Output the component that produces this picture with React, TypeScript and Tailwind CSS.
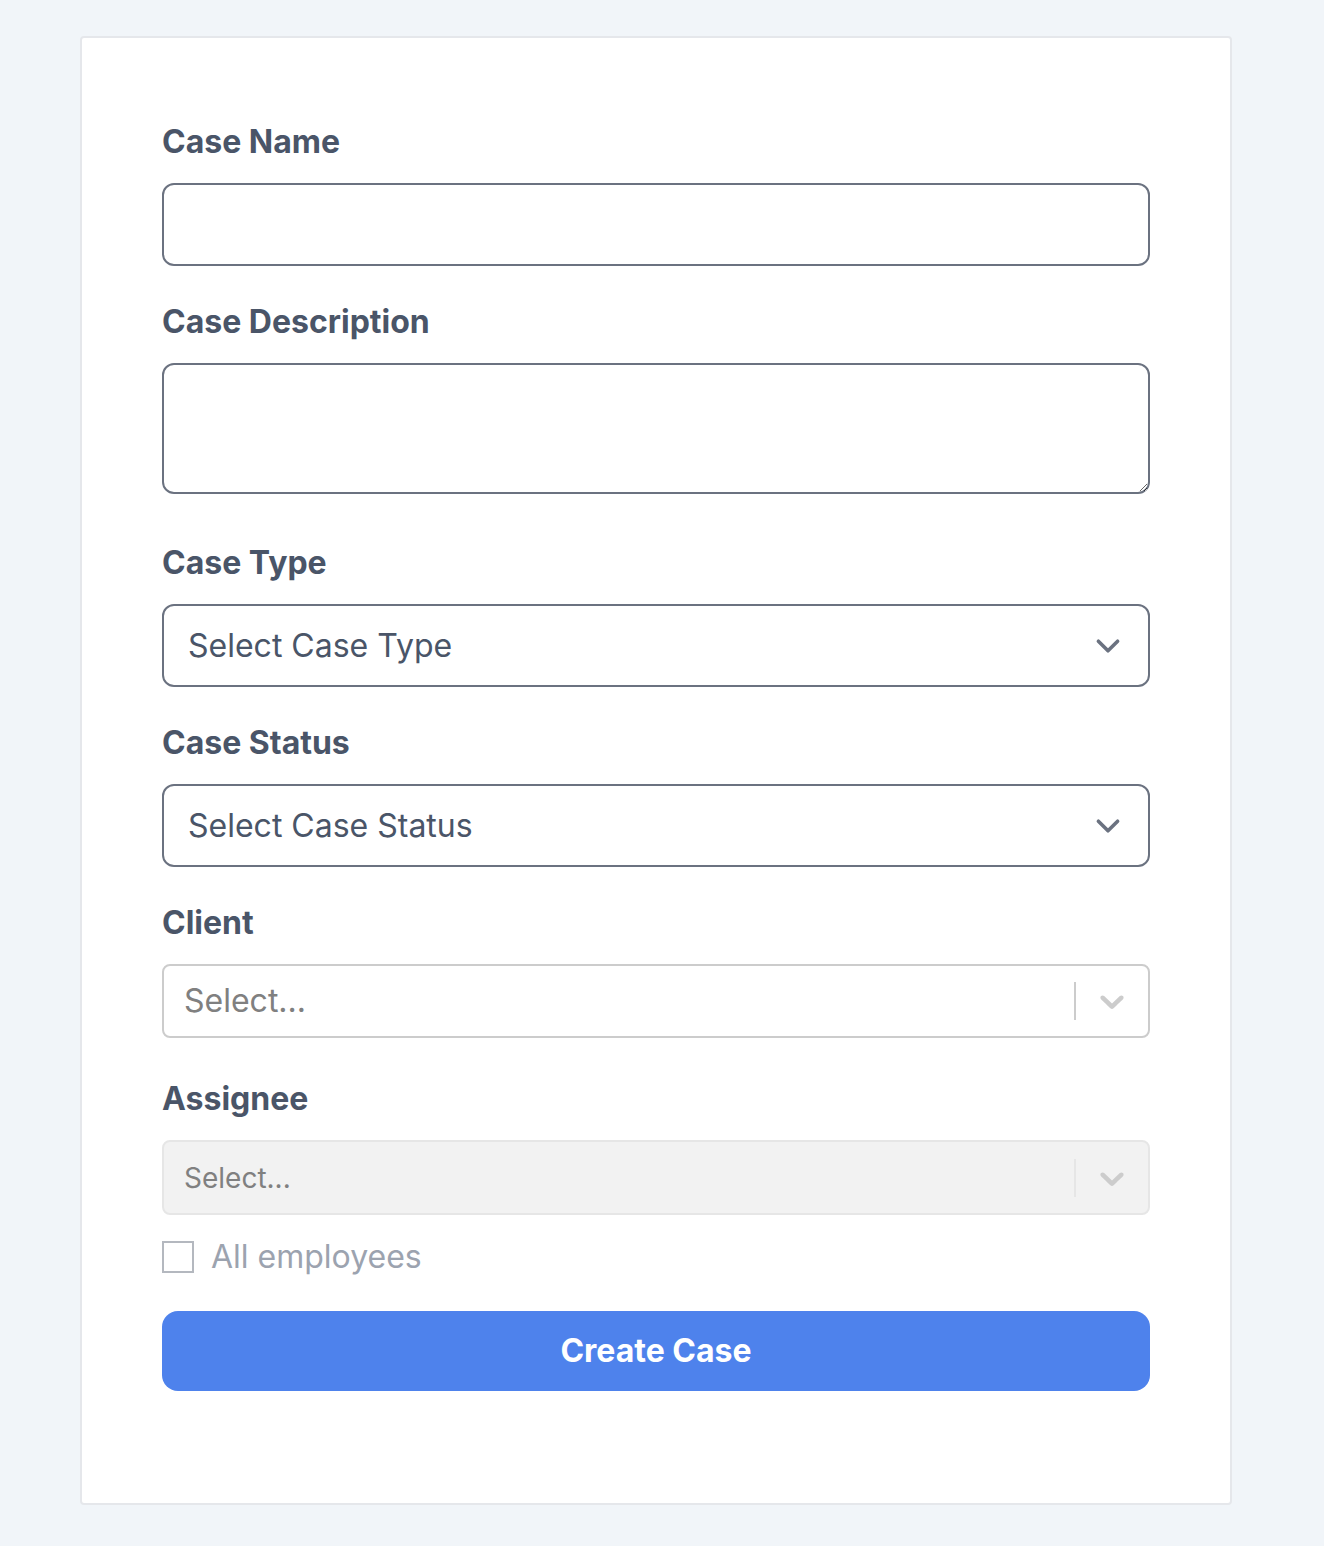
import { useState } from "react";

function Chevron() {
  return (
    <svg width="48" height="48" viewBox="0 0 20 20" fill="none" className="shrink-0">
      <path d="M6 8l4 4 4-4" stroke="#6b7280" strokeWidth="1.5" strokeLinecap="round" strokeLinejoin="round" />
    </svg>
  );
}

function SelectArrow() {
  return (
    <svg width="40" height="40" viewBox="0 0 20 20" fill="#cccccc">
      <path d="M4.516 7.548c0.436-0.446 1.043-0.481 1.576 0l3.908 3.747 3.908-3.747c0.533-0.481 1.141-0.446 1.574 0 0.436 0.445 0.408 1.197 0 1.615-0.406 0.418-4.695 4.502-4.695 4.502-0.217 0.223-0.502 0.335-0.787 0.335s-0.57-0.112-0.789-0.335c0 0-4.287-4.084-4.695-4.502s-0.436-1.17 0-1.615z" />
    </svg>
  );
}

const labelCls = "block text-[32px] leading-[48px] font-bold text-[#4a5568] mb-[17px]";

export default function App() {
  const [name, setName] = useState("");
  const [description, setDescription] = useState("");
  const [allEmployees, setAllEmployees] = useState(false);

  return (
    <div className="min-h-[1546px] bg-[#f1f5f9] pt-[36px] pb-[42px] font-['Inter',sans-serif]">
      <div className="ml-[80px] w-[1152px] rounded-[4px] border-2 border-[#e5e7eb] bg-white p-[80px] pb-[80px]">
        <form onSubmit={(e) => e.preventDefault()} className="mb-[32px]">
          <div className="mb-[32px]">
            <label htmlFor="name" className={labelCls}>
              Case Name
            </label>
            <input
              id="name"
              value={name}
              onChange={(e) => setName(e.target.value)}
              className="block h-[83px] w-full rounded-[12px] border-2 border-[#6b7280] px-[24px] text-[32px] text-[#4a5568] outline-none"
            />
          </div>

          <div className="mb-[45px]">
            <label htmlFor="description" className={labelCls}>
              Case Description
            </label>
            <textarea
              id="description"
              value={description}
              onChange={(e) => setDescription(e.target.value)}
              className="block h-[131px] w-full rounded-[12px] border-2 border-[#6b7280] px-[24px] py-[16px] text-[32px] text-[#4a5568] outline-none"
            />
          </div>

          <div className="mb-[32px]">
            <label className={labelCls}>Case Type</label>
            <div className="flex h-[83px] w-full items-center justify-between rounded-[12px] border-2 border-[#6b7280] pl-[24px] pr-[16px] text-[32px] text-[#4a5568]">
              <span>Select Case Type</span>
              <Chevron />
            </div>
          </div>

          <div className="mb-[32px]">
            <label className={labelCls}>Case Status</label>
            <div className="flex h-[83px] w-full items-center justify-between rounded-[12px] border-2 border-[#6b7280] pl-[24px] pr-[16px] text-[32px] text-[#4a5568]">
              <span>Select Case Status</span>
              <Chevron />
            </div>
          </div>

          <div className="mb-[37px]">
            <label className={labelCls}>Client</label>
            <div className="flex h-[74px] w-full items-center rounded-[8px] border-2 border-[#cccccc] bg-white">
              <span className="flex-1 pl-[20px] text-[32px] text-[#808080]">Select...</span>
              <span className="h-[38px] w-[2px] bg-[#cccccc]" />
              <span className="px-[16px]">
                <SelectArrow />
              </span>
            </div>
          </div>

          <div>
            <label className={labelCls}>Assignee</label>
            <div className="flex h-[75px] w-full items-center rounded-[8px] border-2 border-[#e6e6e6] bg-[#f2f2f2]">
              <span className="flex-1 pl-[20px] text-[28px] text-[#808080]">Select...</span>
              <span className="h-[38px] w-[2px] bg-[#e6e6e6]" />
              <span className="px-[16px]">
                <SelectArrow />
              </span>
            </div>
          </div>

          <label className="mt-[26px] flex items-center gap-[17px]">
            <input
              type="checkbox"
              checked={allEmployees}
              onChange={(e) => setAllEmployees(e.target.checked)}
              className="h-[32px] w-[32px] appearance-none border-2 border-[#b4b8bf] bg-white"
            />
            <span className="text-[32px] leading-[32px] text-[#9ca3af]">All employees</span>
          </label>

          <button
            type="submit"
            className="mt-[38px] block h-[80px] w-full rounded-[16px] bg-[#4e82ec] text-[32px] font-bold text-white"
          >
            Create Case
          </button>
        </form>
      </div>
    </div>
  );
}
